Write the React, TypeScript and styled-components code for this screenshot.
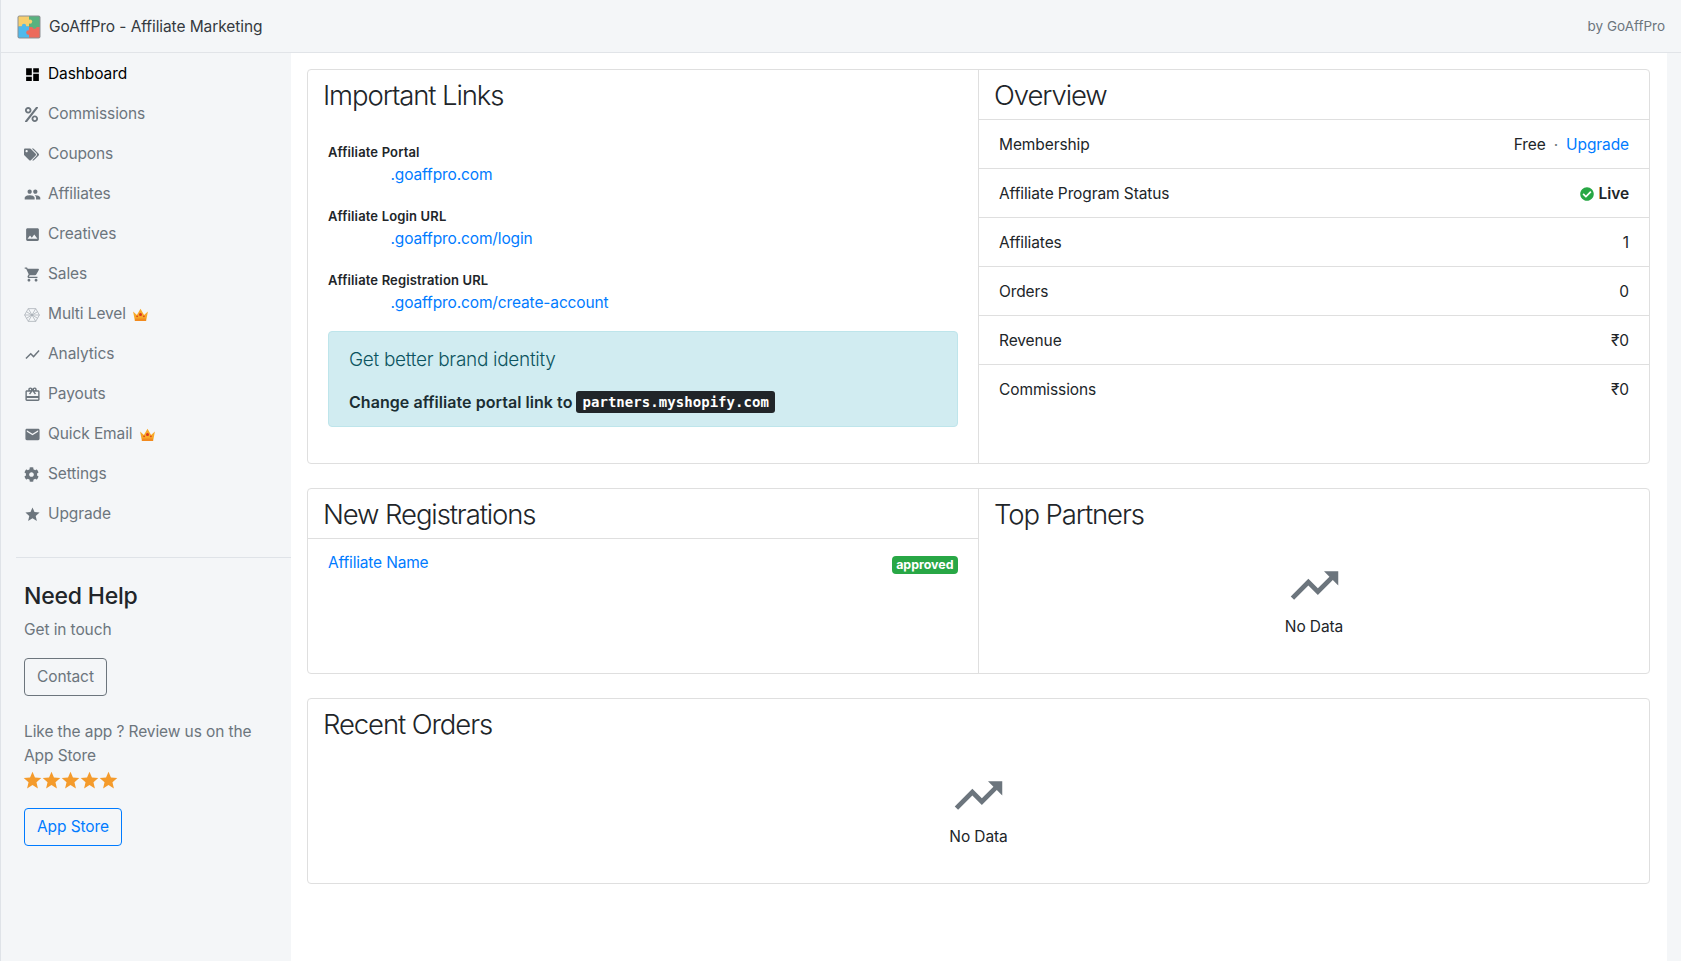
import React from 'react'
import styled, { createGlobalStyle } from 'styled-components'
import { FaCheckCircle, FaCog, FaPercent, FaTags } from 'react-icons/fa'
import { MdDashboard, MdEmail, MdImage, MdOutlineRedeem, MdPeople, MdShoppingCart, MdShowChart, MdStar, MdTrendingUp } from 'react-icons/md'

const Global = createGlobalStyle`
  html,body{margin:0;padding:0;background:#f4f6f8;}
  body{font-family:Inter,"Liberation Sans",sans-serif;font-size:16px;line-height:24px;color:#212529;}
  *{box-sizing:border-box;}
`
const Shell = styled.div`display:flex;flex-direction:column;height:961px;overflow:hidden;border-left:1px solid #dfe3e8;`
const TopBar = styled.header`height:53px;flex:none;display:flex;align-items:center;justify-content:space-between;padding:0 16px 0 16px;border-bottom:1px solid #e1e4e8;background:#f4f6f8;`
const Brand = styled.div`display:flex;align-items:center;gap:8px;font-size:15.5px;letter-spacing:-.08px;color:#343a40;padding-top:1px;`
const ByLine = styled.div`font-size:13.5px;color:#6c757d;`
const Body = styled.div`flex:1;display:flex;min-height:0;`
const Side = styled.aside`width:290px;flex:none;`
const Nav = styled.nav`display:flex;flex-direction:column;`
const NavItem = styled.a<{$active?:boolean}>`height:40px;display:flex;align-items:center;padding:1px 0 0 23px;font-size:15.5px;letter-spacing:-.1px;color:${p=>p.$active?'#000':'#6c757d'};`
const NavIcon = styled.span<{$size:number}>`width:24px;flex:none;display:flex;align-items:center;padding-top:2px;font-size:${p=>p.$size}px;`
const CrownSlot = styled.span`display:flex;margin-left:6px;padding-top:3px;`
const SideRule = styled.hr`border:0;border-top:1px solid #dfe3e8;margin:24px 0 0 15px;`
const Help = styled.div`padding:24px 24px 0 23px;`
const HelpTitle = styled.h4`margin:0;font-size:23px;line-height:29px;font-weight:500;letter-spacing:-.2px;color:#212529;`
const Muted = styled.p`margin:7px 0 0;font-size:15.5px;letter-spacing:-.1px;color:#6c757d;`
const ReviewText = styled(Muted)`margin-top:24px;`
const OutlineBtn = styled.a<{$tone:string}>`display:inline-block;height:38px;margin-top:16px;padding:6px 12px;border:1px solid ${p=>p.$tone};border-radius:4px;font-size:15.5px;letter-spacing:-.1px;color:${p=>p.$tone};`
const Stars = styled.div`display:flex;height:24px;align-items:center;color:#f49b2c;font-size:21px;margin-left:-2px;svg{margin-right:-2px;}`
const Main = styled.main`flex:1;background:#fff;margin-right:14px;padding:16px 17px 0 16px;display:flex;flex-direction:column;gap:24px;`
const Card = styled.section<{$h:number}>`height:${p=>p.$h}px;border:1px solid #dfdfdf;border-radius:4px;display:flex;`
const Col = styled.div`flex:1 1 0;min-width:0;display:flex;flex-direction:column;& + &{border-left:1px solid #dfdfdf;}`
const Title = styled.h3<{$rule?:boolean}>`margin:0;height:50px;flex:none;padding:0 15px;font-size:27.5px;line-height:50px;font-weight:300;letter-spacing:-1.1px;color:#212529;border-bottom:${p=>p.$rule?'1px solid #dfdfdf':'0'};`
const Links = styled.div`padding:22px 20px 0;`
const FieldLabel = styled.div`font-size:13px;line-height:21px;font-weight:600;letter-spacing:.15px;color:#212529;`
const FieldLink = styled.a`display:block;padding-left:62.5px;margin-bottom:19px;color:#007bff;font-size:15.5px;letter-spacing:-.13px;`
const Alert = styled.div`height:96px;margin-top:-3px;padding:15px 20px;background:#d1ecf1;border:1px solid #bee5eb;border-radius:4px;color:#0c5460;`
const AlertTitle = styled.div`font-size:19px;line-height:26px;font-weight:300;letter-spacing:-.3px;`
const AlertBody = styled.div`margin-top:17px;font-size:16px;font-weight:600;letter-spacing:.05px;color:#1b2e33;display:flex;align-items:center;gap:4px;`
const Code = styled.code`background:#212529;color:#fff;font-family:"DejaVu Sans Mono","Liberation Mono",monospace;font-size:14px;font-weight:700;line-height:22px;padding:0 6px;border-radius:3px;`
const Row = styled.div`height:49px;flex:none;display:flex;align-items:center;justify-content:space-between;padding:1px 20px 0;font-size:15.5px;letter-spacing:-.1px;border-bottom:1px solid #dfdfdf;&:last-child{border-bottom:0;}`
const RowValue = styled.span`display:flex;align-items:center;gap:5px;`
const Dot = styled.span`margin:0 3px;color:#6c757d;`
const BlueLink = styled.a`color:#007bff;`
const Live = styled.b`display:flex;align-items:center;gap:5px;font-weight:600;color:#212529;svg{color:#28a745;font-size:14px;}`
const RegRow = styled.div`display:flex;align-items:flex-start;justify-content:space-between;padding:12px 20px;font-size:15.5px;letter-spacing:-.17px;`
const Badge = styled.span`font-size:12.4px;line-height:18px;font-weight:700;letter-spacing:0;color:#fff;background:#28a745;border-radius:4px;padding:0 4.5px;margin-top:5px;`
const Empty = styled.div`flex:1;display:flex;flex-direction:column;align-items:center;padding-top:18px;font-size:15.5px;letter-spacing:-.1px;`
const EmptyIcon = styled.span`display:flex;font-size:57px;height:57px;margin-bottom:1px;color:#6c757d;`

function Logo() {
  return (
    <svg width="24" height="24" viewBox="0 0 24 24">
      <rect x="0.5" y="0.5" width="23" height="23" rx="2" fill="#8b8f93" />
      <rect x="1.5" y="1.5" width="10.5" height="10" fill="#f7cf6e" />
      <rect x="12" y="1.5" width="10.5" height="10.5" fill="#58b27f" />
      <rect x="1.5" y="11.5" width="10.5" height="11" fill="#4fb9ec" />
      <rect x="12" y="12" width="10.5" height="10.5" fill="#ec6a5c" />
      <circle cx="13" cy="6.6" r="2.2" fill="#f7cf6e" />
      <circle cx="17.5" cy="11.6" r="2.2" fill="#58b27f" />
      <circle cx="7" cy="11" r="2.2" fill="#4fb9ec" />
      <circle cx="11.4" cy="17.5" r="2.2" fill="#ec6a5c" />
    </svg>
  )
}

function Crown() {
  return (
    <svg width="17" height="14" viewBox="0 0 16 14">
      <path d="M.6 3.5 4.4 7 8 .8 11.6 7l3.8-3.5L13.6 13H2.4Z" fill="#f8a928" />
      <path d="M2.6 10.5h10.8L13.6 13H2.4Z" fill="#f28a1e" />
      <circle cx="8" cy="6.6" r="1.5" fill="#d8361f" />
      <circle cx="4.6" cy="8.4" r=".8" fill="#d8361f" />
      <circle cx="11.4" cy="8.4" r=".8" fill="#d8361f" />
    </svg>
  )
}

function Hexagon() {
  return (
    <svg width="16" height="14" viewBox="0 0 16 14" fill="none" stroke="#a4abb2" strokeWidth=".7">
      <path d="M4.3 .6h7.4L15.4 7l-3.7 6.4H4.3L.6 7Z" />
      <path d="M4.3 .6 11.7 13.4M11.7 .6 4.3 13.4M.6 7h14.8M2.5 3.8 13.5 10.2M13.5 3.8 2.5 10.2" />
    </svg>
  )
}

const NAV: { label: string; icon: React.ReactNode; size?: number; crown?: boolean; active?: boolean }[] = [
  { label: 'Dashboard', icon: <MdDashboard />, active: true },
  { label: 'Commissions', icon: <FaPercent />, size: 15 },
  { label: 'Coupons', icon: <FaTags />, size: 15 },
  { label: 'Affiliates', icon: <MdPeople /> },
  { label: 'Creatives', icon: <MdImage /> },
  { label: 'Sales', icon: <MdShoppingCart /> },
  { label: 'Multi Level', icon: <Hexagon />, crown: true },
  { label: 'Analytics', icon: <MdShowChart /> },
  { label: 'Payouts', icon: <MdOutlineRedeem /> },
  { label: 'Quick Email', icon: <MdEmail />, crown: true },
  { label: 'Settings', icon: <FaCog />, size: 15 },
  { label: 'Upgrade', icon: <MdStar /> },
]

const NoData = () => (
  <Empty>
    <EmptyIcon><MdTrendingUp /></EmptyIcon>
    No Data
  </Empty>
)

export default function App() {
  return (
    <Shell>
      <Global />
      <TopBar>
        <Brand><Logo />GoAffPro - Affiliate Marketing</Brand>
        <ByLine>by GoAffPro</ByLine>
      </TopBar>
      <Body>
        <Side>
          <Nav>
            {NAV.map(n => (
              <NavItem key={n.label} $active={n.active}>
                <NavIcon $size={n.size ?? 17}>{n.icon}</NavIcon>
                {n.label}
                {n.crown && <CrownSlot><Crown /></CrownSlot>}
              </NavItem>
            ))}
          </Nav>
          <SideRule />
          <Help>
            <HelpTitle>Need Help</HelpTitle>
            <Muted>Get in touch</Muted>
            <OutlineBtn $tone="#6c757d">Contact</OutlineBtn>
            <ReviewText>Like the app ? Review us on the App Store</ReviewText>
            <Stars>{[0, 1, 2, 3, 4].map(i => <MdStar key={i} />)}</Stars>
            <OutlineBtn $tone="#007bff">App Store</OutlineBtn>
          </Help>
        </Side>
        <Main>
          <Card $h={395}>
            <Col>
              <Title>Important Links</Title>
              <Links>
                <FieldLabel>Affiliate Portal</FieldLabel>
                <FieldLink>.goaffpro.com</FieldLink>
                <FieldLabel>Affiliate Login URL</FieldLabel>
                <FieldLink>.goaffpro.com/login</FieldLink>
                <FieldLabel>Affiliate Registration URL</FieldLabel>
                <FieldLink>.goaffpro.com/create-account</FieldLink>
                <Alert>
                  <AlertTitle>Get better brand identity</AlertTitle>
                  <AlertBody>Change affiliate portal link to <Code>partners.myshopify.com</Code></AlertBody>
                </Alert>
              </Links>
            </Col>
            <Col>
              <Title $rule>Overview</Title>
              <div>
                <Row><span>Membership</span><RowValue>Free <Dot>·</Dot> <BlueLink>Upgrade</BlueLink></RowValue></Row>
                <Row><span>Affiliate Program Status</span><Live><FaCheckCircle />Live</Live></Row>
                <Row><span>Affiliates</span><span>1</span></Row>
                <Row><span>Orders</span><span>0</span></Row>
                <Row><span>Revenue</span><span>₹0</span></Row>
                <Row><span>Commissions</span><span>₹0</span></Row>
              </div>
            </Col>
          </Card>
          <Card $h={186}>
            <Col>
              <Title $rule>New Registrations</Title>
              <RegRow>
                <BlueLink>Affiliate Name</BlueLink>
                <Badge>approved</Badge>
              </RegRow>
            </Col>
            <Col>
              <Title>Top Partners</Title>
              <NoData />
            </Col>
          </Card>
          <Card $h={186}>
            <Col>
              <Title>Recent Orders</Title>
              <NoData />
            </Col>
          </Card>
        </Main>
      </Body>
    </Shell>
  )
}
